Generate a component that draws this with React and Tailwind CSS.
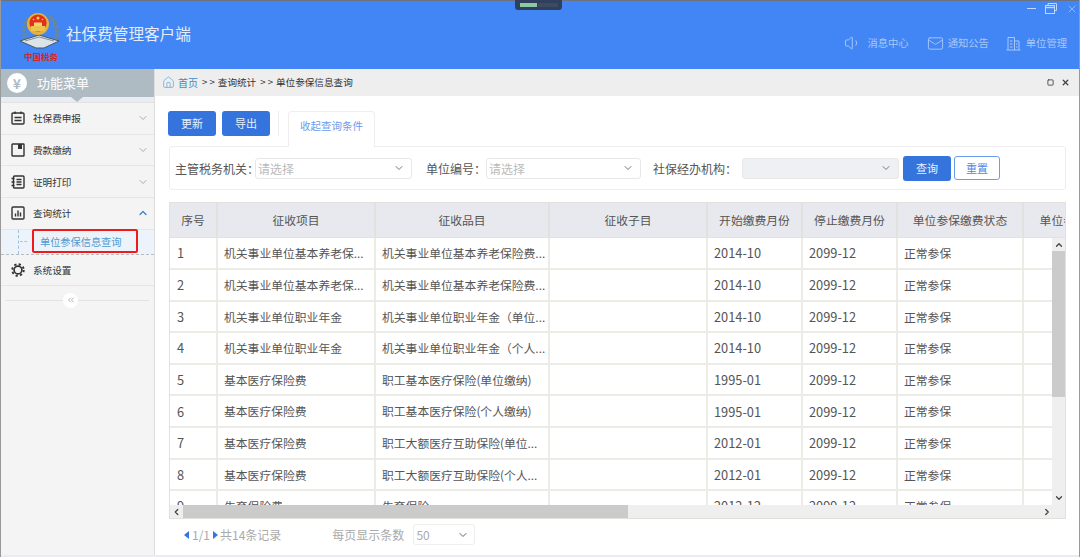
import { ChevronDown, ChevronUp, ChevronLeft, ChevronRight, Volume1, Mail, X, Home, ChevronsLeft, Square } from "lucide-react";

const font = { fontFamily: '"Noto Sans CJK SC", "Liberation Sans", sans-serif' };

const rows = [
  ["1", "机关事业单位基本养老保...", "机关事业单位基本养老保险费...", "2014-10"],
  ["2", "机关事业单位基本养老保...", "机关事业单位基本养老保险费...", "2014-10"],
  ["3", "机关事业单位职业年金", "机关事业单位职业年金（单位...", "2014-10"],
  ["4", "机关事业单位职业年金", "机关事业单位职业年金（个人...", "2014-10"],
  ["5", "基本医疗保险费", "职工基本医疗保险(单位缴纳)", "1995-01"],
  ["6", "基本医疗保险费", "职工基本医疗保险(个人缴纳)", "1995-01"],
  ["7", "基本医疗保险费", "职工大额医疗互助保险(单位...", "2012-01"],
  ["8", "基本医疗保险费", "职工大额医疗互助保险(个人...", "2012-01"],
  ["9", "生育保险费", "生育保险", "2012-12"],
];

const heads = [
  ["序号", "w-[47px]"],
  ["征收项目", "w-[158px]"],
  ["征收品目", "w-[174px]"],
  ["征收子目", "w-[158px]"],
  ["开始缴费月份", "w-[95px]"],
  ["停止缴费月份", "w-[95px]"],
  ["单位参保缴费状态", "w-[126px]"],
  ["单位参保人数", "w-[104px]"],
];

const IconReport = () => (
  <svg width="14" height="14" viewBox="0 0 14 14" fill="none" stroke="#333" strokeWidth="1.4">
    <rect x="1" y="2" width="12" height="11" rx="1" />
    <path d="M4 0.5v2.5M10 0.5v2.5M3.5 6.5h7M3.5 9.5h7" />
  </svg>
);

const IconPay = () => (
  <svg width="14" height="14" viewBox="0 0 14 14" fill="none" stroke="#333" strokeWidth="1.4">
    <rect x="1" y="1" width="12" height="12" rx="0.5" />
    <path d="M7 1h4v5H7z" fill="#333" stroke="none" />
  </svg>
);

const IconPrint = () => (
  <svg width="14" height="14" viewBox="0 0 14 14" fill="none" stroke="#333" strokeWidth="1.4">
    <rect x="2.5" y="1" width="10.5" height="12" rx="1" />
    <path d="M0.5 3.5h3M0.5 7h3M0.5 10.5h3M5.5 4.5h5M5.5 7h5M5.5 9.5h5" />
  </svg>
);

const IconStats = () => (
  <svg width="14" height="14" viewBox="0 0 14 14" fill="none" stroke="#333" strokeWidth="1.4">
    <rect x="1" y="1" width="12" height="12" rx="1" />
    <path d="M4.5 10.5v-3M7 10.5v-6M9.5 10.5v-4" />
  </svg>
);

const IconGear = () => (
  <svg width="14" height="14" viewBox="0 0 15 15" fill="none" stroke="#333">
    <circle cx="7.5" cy="7.5" r="4.2" strokeWidth="1.8" />
    <circle cx="7.5" cy="7.5" r="6.2" strokeWidth="2" strokeDasharray="2.4 2.47" />
  </svg>
);

const IconUnit = () => (
  <svg width="15" height="15" viewBox="0 0 15 15" fill="none" stroke="currentColor" strokeWidth="1">
    <path d="M2 14V1.5h6.5V14M8.5 5H13v9M0.5 14h14M4 5h2.5M4 8h2.5M4 11h2.5M10 8h1.5M10 11h1.5" />
  </svg>
);

const IconRestore = () => (
  <svg width="12" height="11" viewBox="0 0 12 11" fill="none" stroke="currentColor" strokeWidth="1">
    <path d="M3 2.5V0.5h8.5v7H9.5" />
    <rect x="0.5" y="2.5" width="9" height="8" />
    <path d="M0.5 4.5h9" strokeWidth="1.4" />
  </svg>
);

function Emblem() {
  return (
    <div className="flex w-[44px] flex-col items-center">
      <svg width="44" height="40" viewBox="0 0 44 40" className="block">
        <path d="M9 8 C4 16 4 24 8 30" fill="none" stroke="#6d8795" strokeWidth="4" strokeDasharray="3 1" />
        <path d="M30 6 C38 12 40 22 36 30" fill="none" stroke="#6d8795" strokeWidth="4" strokeDasharray="3 1" />
        <path d="M1 31 L20 25 L40 31 L25 38 L17 38Z" fill="#dde4e8" stroke="#46576a" strokeWidth="1" />
        <path d="M6 31 L20 27 L35 31" fill="none" stroke="#7c8f9c" strokeWidth="1" />
        <circle cx="19" cy="14" r="11" fill="#e6b23c" />
        <circle cx="19" cy="13" r="8.6" fill="#e2301d" />
        <rect x="12" y="16" width="14" height="5" fill="#eec24e" />
        <path d="M15 12.5h8v3.5h-8z" fill="#f3d36b" />
        <circle cx="19" cy="8" r="1.5" fill="#f7d54a" />
        <circle cx="14.5" cy="9.5" r="0.8" fill="#f7d54a" />
        <circle cx="23.5" cy="9.5" r="0.8" fill="#f7d54a" />
      </svg>
      <span className="text-[8.5px] leading-[12px] font-bold text-[#d8261c]" style={{ fontFamily: '"Noto Sans CJK SC", serif' }}>中国税务</span>
    </div>
  );
}

function MenuRow({ name, icon: Icon, open }) {
  return (
    <div className="flex h-[31.7px] items-center border-b border-[#e6e6e6] pl-[10px] pr-[5px] text-[9.6px] text-[#333]">
      <Icon />
      <span className="ml-[8px] flex-1">{name}</span>
      {open ? (
        <ChevronUp size={12} className="text-[#3f7fc4]" strokeWidth={2.5} />
      ) : (
        <ChevronDown size={12} className="text-[#aaa]" />
      )}
    </div>
  );
}

function Field({ label, width, labelWidth, placeholder, disabled }) {
  return (
    <div className="flex items-center">
      <span className="mt-[1px] whitespace-nowrap text-[12px] text-[#555]" style={{ width: labelWidth }}>{label}</span>
      <div className={`flex h-[21px] items-center justify-between rounded-[3px] border border-[#e8e8e8] pl-[2px] pr-[6px] text-[12px] text-[#bbb] ${disabled ? "bg-[#eef0f3]" : "bg-white"}`} style={{ width }}>
        <span className="mt-[1px]">{placeholder}</span>
        <ChevronDown size={12} className="text-[#777]" />
      </div>
    </div>
  );
}

export default function App() {
  return (
    <div className="flex h-[557px] w-[1080px] flex-col overflow-hidden border-r border-l border-[#999] bg-white" style={font}>
      <header className="relative flex h-[69px] shrink-0 items-start border-t border-[#6b7280] bg-[#4285f4] pl-[18px] pt-[9px] text-white">
        <Emblem />
        <h1 className="ml-[3px] mt-[12px] text-[15.6px] leading-[22px] text-[#e4edfb]">社保费管理客户端</h1>
        <div className="absolute left-[514px] top-[-1px] flex h-[10px] w-[47px] items-center gap-[1px] rounded-b-[3px] bg-[#30405c] pl-[5px]">
          <span className="h-[4px] w-[17px] bg-[#8cc9a0]" />
          <span className="h-[4px] w-[20px] bg-[#3c4a63]" />
        </div>
        <div className="absolute left-[1026px] top-[2px] flex items-start text-[#c3d8fb]">
          <div className="mt-[5px] h-[1px] w-[9px] bg-current" />
          <div className="ml-[9px]"><IconRestore /></div>
          <X size={12} strokeWidth={1.2} className="ml-[9px]" />
        </div>
        <nav className="ml-auto mr-[12px] mt-[24px] flex items-center text-[10.3px] text-[#a9c8fa]">
          <Volume1 size={18} strokeWidth={1.3} />
          <span className="ml-[5px]">消息中心</span>
          <Mail size={17} strokeWidth={1.3} className="ml-[18px]" />
          <span className="ml-[4px]">通知公告</span>
          <div className="ml-[17px]"><IconUnit /></div>
          <span className="ml-[5px]">单位管理</span>
        </nav>
      </header>

      <div className="flex min-h-0 flex-1">
        <aside className="flex w-[154px] shrink-0 flex-col border-r border-[#ddd] bg-[#f4f4f4]">
          <div className="relative flex h-[28px] shrink-0 items-center bg-[#afbbc3] pl-[6px] text-[13px] text-white">
            <span className="flex h-[20px] w-[20px] items-center justify-center rounded-full bg-white text-[14px] font-bold leading-none text-[#afbbc3]">¥</span>
            <span className="ml-[10px]">功能菜单</span>
            <span className="absolute bottom-[-5px] left-[70px] h-0 w-0 border-x-[6px] border-t-[5px] border-x-transparent border-t-[#afbbc3]" />
          </div>
          <div className="h-[6px] shrink-0 border-b border-[#e2e2e2] bg-[#e9edf3]" />
          <MenuRow name="社保费申报" icon={IconReport} />
          <MenuRow name="费款缴纳" icon={IconPay} />
          <MenuRow name="证明打印" icon={IconPrint} />
          <MenuRow name="查询统计" icon={IconStats} open />
          <div className="flex h-[25px] items-center border-b border-dashed border-[#bbb] bg-[#ecf3fa] pl-[1px]">
            <div className="ml-[16px] h-full border-l border-dashed border-[#9cc0e0]" />
            <div className="ml-[1px] w-[7px] border-t border-dashed border-[#bbb]" />
            <div className="-mt-px ml-[5px] flex h-[24px] w-[106px] items-center rounded-[2px] border-2 border-[#ef1b1b] pl-[6px] text-[10.2px] text-[#4f9ad0]">单位参保信息查询</div>
          </div>
          <div className="flex h-[31px] items-center border-b border-[#e6e6e6] pl-[10px] text-[9.6px] text-[#333]">
            <IconGear />
            <span className="ml-[8px]">系统设置</span>
          </div>
          <div className="relative mx-[5px] mt-[14px] border-t border-[#e2e2e2]">
            <span className="absolute left-[57px] top-[-8px] flex h-[15px] w-[15px] items-center justify-center rounded-full bg-white text-[#9aa]">
              <ChevronsLeft size={10} />
            </span>
          </div>
        </aside>

        <main className="flex min-w-0 flex-1 flex-col">
          <div className="flex h-[27px] shrink-0 items-center bg-[#eeeeee] pl-[7px] pr-[9px] text-[9.6px] text-[#333]">
            <Home size={13} strokeWidth={1.4} className="text-[#6aa8d8]" />
            <span className="ml-[3px] text-[10px] text-[#3c8dc8]">首页</span>
            <span className="ml-[4px]">&gt; &gt;</span>
            <span className="ml-[3px]">查询统计</span>
            <span className="ml-[4px]">&gt; &gt;</span>
            <span className="ml-[3px]">单位参保信息查询</span>
            <Square size={7} strokeWidth={3} className="ml-auto text-[#444]" />
            <X size={9} strokeWidth={3.5} className="ml-[7px] text-[#444]" />
          </div>

          <div className="flex min-h-0 flex-1 flex-col pl-[14px]">
            <div className="relative z-10 mt-[15px] flex h-[35px] shrink-0 items-start">
              <button className="-ml-px h-[25px] w-[48px] rounded-[3px] bg-[#3574dc] text-[11px] text-[#e9f0fb]">更新</button>
              <button className="ml-[6px] h-[25px] w-[48px] rounded-[3px] bg-[#3574dc] text-[11px] text-[#e9f0fb]">导出</button>
              <div className="ml-[8px] h-[25px] border-l border-[#eee]" />
              <div className="ml-[9px] flex h-[36px] w-[87px] items-start justify-center rounded-t-[4px] border border-b-0 border-[#eee] bg-white pt-[6px] text-[10.5px] text-[#6a9cf0]">收起查询条件</div>
            </div>

            <div className="flex h-[44px] w-[897px] shrink-0 items-center rounded-[3px] border border-[#eee] pl-[5px]">
              <Field label="主管税务机关：" labelWidth="80px" width="157px" placeholder="请选择" />
              <div className="w-[14px]" />
              <Field label="单位编号：" labelWidth="60px" width="155px" placeholder="请选择" />
              <div className="w-[12px]" />
              <Field label="社保经办机构：" labelWidth="89px" width="157px" disabled />
              <button className="ml-[4px] h-[25px] w-[48px] rounded-[3px] bg-[#3574dc] text-[11px] text-[#e9f0fb]">查询</button>
              <button className="ml-[3px] h-[24px] w-[46px] rounded-[3px] border border-[#6a9cf0] bg-white text-[11px] text-[#4f86e8]">重置</button>
            </div>

            <div className="relative mt-[12px] h-[317px] w-[897px] shrink-0 overflow-hidden border border-[#e2e2dc]">
              <table className="w-[957px] table-fixed border-collapse text-[11.8px] text-[#555]">
                <colgroup>
                  {heads.map(([h, w]) => (
                    <col key={h} className={w} />
                  ))}
                </colgroup>
                <thead>
                  <tr className="h-[34.5px] bg-[#e8e9ee]">
                    {heads.map(([h]) => (
                      <th key={h} className="overflow-hidden whitespace-nowrap border-r-2 border-b border-[#e2e2dc] text-center font-normal">{h}</th>
                    ))}
                  </tr>
                </thead>
                <tbody>
                  {rows.map((r) => (
                    <tr key={r[0]} className="h-[31.6px]">
                      <td className="border-r-2 border-b-2 border-[#ecece6] pl-[7px] text-[12.8px]">{r[0]}</td>
                      <td className="whitespace-nowrap border-r-2 border-b-2 border-[#ecece6] pl-[6px]">{r[1]}</td>
                      <td className="whitespace-nowrap border-r-2 border-b-2 border-[#ecece6] pl-[6px]">{r[2]}</td>
                      <td className="border-r-2 border-b-2 border-[#ecece6]" />
                      <td className="border-r-2 border-b-2 border-[#ecece6] pl-[6px] text-[12.8px]">{r[3]}</td>
                      <td className="border-r-2 border-b-2 border-[#ecece6] pl-[6px] text-[12.8px]">2099-12</td>
                      <td className="border-r-2 border-b-2 border-[#ecece6] pl-[6px]">正常参保</td>
                      <td className="border-r-2 border-b-2 border-[#ecece6]" />
                    </tr>
                  ))}
                </tbody>
              </table>

              {/* scrollbars sit on top of the table */}
              <div className="absolute right-0 top-[35px] bottom-[13px] flex w-[13px] flex-col items-center bg-[#efefef] text-[#444]">
                <ChevronUp size={10} strokeWidth={3} className="mt-[1px] h-[12px]" />
                <div className="h-[146px] w-full bg-[#cbcbcb]" />
                <ChevronDown size={10} strokeWidth={3} className="mb-[1px] mt-auto h-[12px]" />
              </div>
              <div className="absolute inset-x-0 bottom-0 flex h-[13px] items-center bg-[#efefef] text-[#444]">
                <ChevronLeft size={10} strokeWidth={3} className="w-[13px]" />
                <div className="h-full w-[445px] bg-[#cbcbcb]" />
                <ChevronRight size={10} strokeWidth={3} className="ml-auto mr-[13px]" />
              </div>
            </div>

            <div className="mt-[5px] flex h-[21px] shrink-0 items-center pl-[15px] text-[12px] text-[#aaa]">
              <span className="h-0 w-0 border-y-[4px] border-r-[5px] border-y-transparent border-r-[#3574dc]" />
              <span className="ml-[3px]">1/1</span>
              <span className="ml-[3px] h-0 w-0 border-y-[4px] border-l-[5px] border-y-transparent border-l-[#3574dc]" />
              <span className="ml-[2px]">共14条记录</span>
              <span className="ml-[51px]">每页显示条数</span>
              <div className="ml-[9px] flex h-[21px] w-[62px] items-center justify-between rounded-[3px] border border-[#eee] pl-[2px] pr-[5px]">
                <span>50</span>
                <ChevronDown size={12} className="text-[#666]" />
              </div>
            </div>
          </div>
        </main>
      </div>
      <div className="h-[2px] shrink-0 bg-[#e9edf3]" />
    </div>
  );
}
